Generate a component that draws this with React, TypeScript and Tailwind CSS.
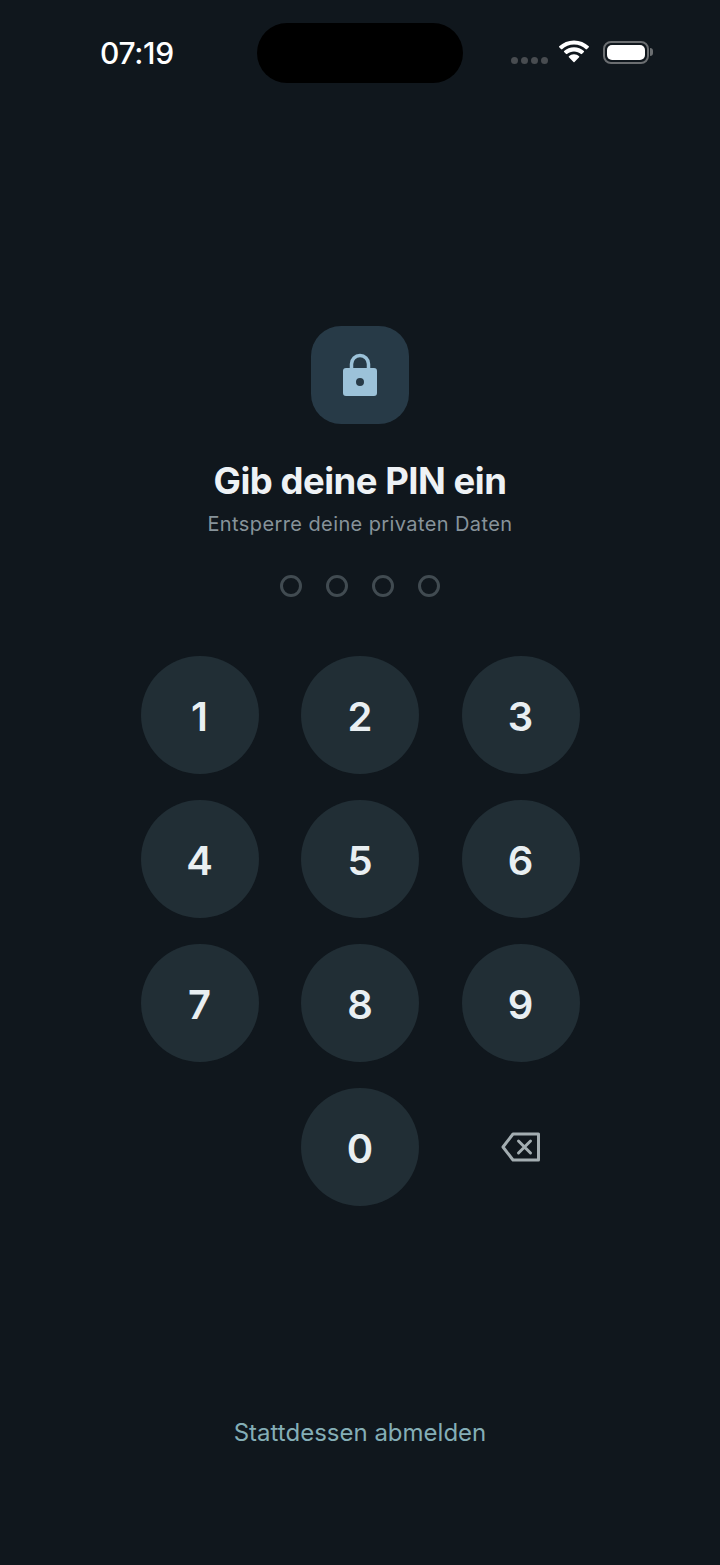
const keys = ["1", "2", "3", "4", "5", "6", "7", "8", "9"];

function Wifi() {
  return (
    <svg width="32" height="24" viewBox="0 0 32 24" fill="white">
      <path d="M16 4.6c4.6 0 8.8 1.8 11.9 4.7.3.2.6.2.9 0l2-2c.3-.3.3-.7 0-1C27 2.600 21.800.400 16 .400S5 2.600 1.200 6.300c-.3.3-.3.7 0 1l2 2c.3.2.6.2.9 0C7.200 6.400 11.400 4.600 16 4.600z" />
      <path d="M16 11.400c2.700 0 5.100 1 7 2.700.3.2.6.2.9 0l2-2c.3-.3.3-.7 0-1-2.600-2.400-6.100-3.900-9.900-3.900s-7.300 1.500-9.900 3.900c-.3.3-.3.7 0 1l2 2c.3.2.6.2.9 0 1.900-1.700 4.300-2.700 7-2.700z" />
      <path d="M16 14.200c-2 0-3.800.8-5.100 2-.3.3-.3.7 0 1l4.600 4.800c.3.300.7.300 1 0l4.600-4.800c.3-.3.3-.7 0-1-1.300-1.200-3.100-2-5.100-2z" />
    </svg>
  );
}

function Battery() {
  return (
    <div className="flex items-center gap-[1px]">
      <div className="w-[46px] h-[23px] rounded-[8px] border-2 border-[#6b6e71] p-[2px]">
        <div className="w-full h-full rounded-[5px] bg-white" />
      </div>
      <div className="w-[3px] h-[8px] rounded-r-full bg-[#6b6e71]" />
    </div>
  );
}

function Key({ label }: { label: string }) {
  return (
    <button className="w-[118px] h-[118px] rounded-full bg-[#212e35] text-[#e9eff2] text-[40px] font-semibold flex items-center justify-center">
      <span className="mt-[3px]">{label}</span>
    </button>
  );
}

export default function App() {
  return (
    <div className="w-[720px] h-[1565px] bg-[#10171d] flex flex-col items-center font-['Inter',sans-serif]">
      {/* status bar */}
      <div className="w-full h-[60px] mt-[23px] flex items-center pl-[100px]">
        <span className="w-[157px] shrink-0 text-white text-[30px] font-medium tracking-[-0.3px] -mt-[1px] leading-none">07:19</span>
        <div className="w-[206px] h-[60px] shrink-0 rounded-full bg-black" />
        <div className="flex items-center -mt-[2px] h-[30px] ml-[48px]">
          <div className="flex gap-[3px] mr-[10px] mt-[16px]">
            <span className="w-[7px] h-[7px] rounded-full bg-[#484c50]" />
            <span className="w-[7px] h-[7px] rounded-full bg-[#484c50]" />
            <span className="w-[7px] h-[7px] rounded-full bg-[#484c50]" />
            <span className="w-[7px] h-[7px] rounded-full bg-[#484c50]" />
          </div>
          <Wifi />
          <div className="ml-[13px]">
            <Battery />
          </div>
        </div>
      </div>

      <div className="mt-[243px] w-[98px] h-[98px] rounded-[30px] bg-[#273a47] flex items-center justify-center">
        <svg width="36" height="44" viewBox="0 0 36 44" className="-mt-[1px]">
          <path d="M9.500 18v-7a8.500 8.500 0 0 1 17 0v7" fill="none" stroke="#9cc2d9" strokeWidth="3.500" />
          <path fillRule="evenodd" fill="#9cc2d9" d="M4 15h28a3 3 0 0 1 3 3v22a3 3 0 0 1-3 3H4a3 3 0 0 1-3-3V18a3 3 0 0 1 3-3zm14 10a4 4 0 1 0 0 8 4 4 0 0 0 0-8z" />
        </svg>
      </div>

      <h1 className="mt-[34px] text-[36.500px] leading-[46px] font-bold text-[#eef2f5] tracking-[-0.5px]">Gib deine PIN ein</h1>
      <p className="mt-[7px] text-[20px] leading-[26px] text-[#87939a] tracking-[0.4px]">Entsperre deine privaten Daten</p>

      <div className="mt-[38px] flex gap-[24px]">
        <span className="w-[22px] h-[22px] rounded-full border-[3px] border-[#414b51]" />
        <span className="w-[22px] h-[22px] rounded-full border-[3px] border-[#414b51]" />
        <span className="w-[22px] h-[22px] rounded-full border-[3px] border-[#414b51]" />
        <span className="w-[22px] h-[22px] rounded-full border-[3px] border-[#414b51]" />
      </div>

      <div className="mt-[59px] grid grid-cols-[118px_118px_118px] gap-x-[42.5px] gap-y-[26px]">
        {keys.map((k) => (
          <Key key={k} label={k} />
        ))}
        <div />
        <Key label="0" />
        <button className="flex items-center justify-center">
          <svg width="40" height="30" viewBox="0 0 40 30" fill="none" stroke="#a3adb1" strokeWidth="3" strokeLinejoin="round" strokeLinecap="round">
            <path d="M12 2h25.500v26H12L2 15z" />
            <path d="M17.500 9l12 12M29.500 9l-12 12" />
          </svg>
        </button>
      </div>

      <button className="mt-[212px] text-[24px] leading-[30px] text-[#84aeb6]">Stattdessen abmelden</button>
    </div>
  );
}
